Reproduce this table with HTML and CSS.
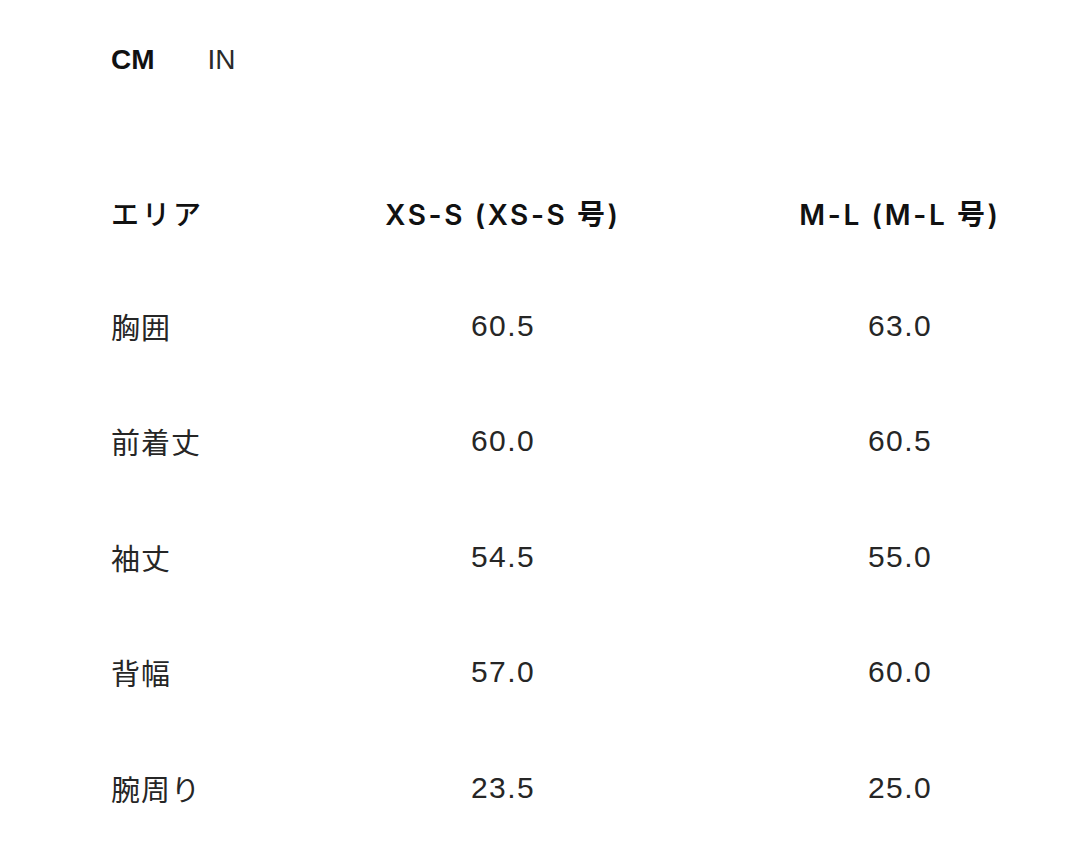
FILE: index.html
```html
<!DOCTYPE html>
<html lang="ja">
<head>
<meta charset="utf-8">
<link rel="stylesheet" href="styles.css">
</head>
<body>
<div class="page">
  <div class="units">
    <span class="unit active">CM</span>
    <span class="unit">IN</span>
  </div>
  <div class="table">
    <div class="row head">
      <div class="cell label">エリア</div>
      <div class="cell val">XS-S (XS-S 号)</div>
      <div class="cell val">M-L (M-L 号)</div>
    </div>
    <div class="row">
      <div class="cell label">胸囲</div>
      <div class="cell val">60.5</div>
      <div class="cell val">63.0</div>
    </div>
    <div class="row">
      <div class="cell label">前着丈</div>
      <div class="cell val">60.0</div>
      <div class="cell val">60.5</div>
    </div>
    <div class="row">
      <div class="cell label">袖丈</div>
      <div class="cell val">54.5</div>
      <div class="cell val">55.0</div>
    </div>
    <div class="row">
      <div class="cell label">背幅</div>
      <div class="cell val">57.0</div>
      <div class="cell val">60.0</div>
    </div>
    <div class="row">
      <div class="cell label">腕周り</div>
      <div class="cell val">23.5</div>
      <div class="cell val">25.0</div>
    </div>
  </div>
</div>
</body>
</html>
```
FILE: styles.css
```css
html, body {
  margin: 0;
  padding: 0;
  background: #ffffff;
}
body {
  font-family: "Liberation Sans", "Noto Sans CJK JP", sans-serif;
  color: #222222;
}
.page {
  padding: 40px 0 0 111px;
}
.units {
  display: flex;
  gap: 53px;
  height: 40px;
  align-items: center;
}
.unit {
  font-size: 28px;
  color: #2a2a2a;
  font-weight: 400;
}
.unit.active {
  font-weight: 700;
  color: #111111;
}
.table {
  margin-top: 78px;
}
.row {
  display: grid;
  grid-template-columns: 135px 280px 280px;
  column-gap: 117px;
  height: 115.5px;
  align-items: center;
}
.row.head {
  height: 110px;
}
.cell {
  font-size: 30px;
  letter-spacing: 1.4px;
  white-space: nowrap;
  color: #262626;
}
.val {
  text-align: center;
}
.label {
  font-size: 29px;
  letter-spacing: 1px;
}
.head .cell {
  font-family: Inter, "Noto Sans CJK JP", sans-serif;
  font-weight: 600;
  font-size: 28px;
  letter-spacing: 2.6px;
  color: #111111;
}
.head .label {
  font-family: "Noto Sans CJK JP", sans-serif;
  font-weight: 500;
  letter-spacing: 3px;
}
```
